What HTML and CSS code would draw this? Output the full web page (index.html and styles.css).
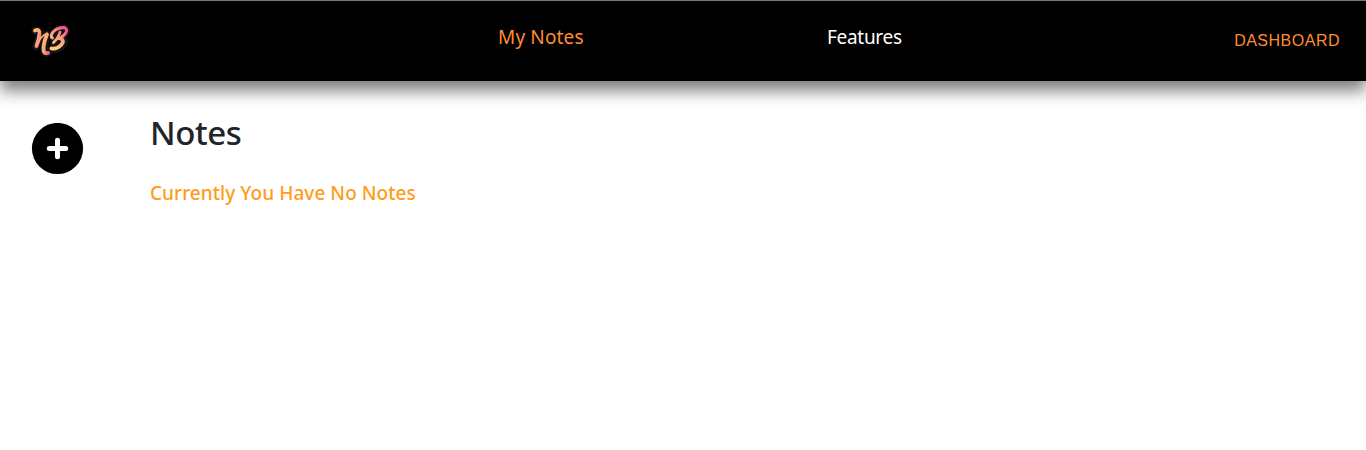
FILE: index.html
```
<!DOCTYPE html>
<html lang="en">
<head>
<meta charset="utf-8">
<title>Notes</title>
<link rel="stylesheet" href="styles.css">
</head>
<body>
<header class="navbar">
  <a class="logo" aria-label="Home">
    <svg width="40" height="36" viewBox="0 0 40 36" fill="none" stroke-linecap="round" stroke-linejoin="round">
      <defs>
        <linearGradient id="warm" x1="0" y1="0" x2="1" y2="1"><stop offset="0" stop-color="#f8b66a"/><stop offset=".5" stop-color="#fbab78"/><stop offset="1" stop-color="#f6608c"/></linearGradient>
        <linearGradient id="bowl" gradientUnits="userSpaceOnUse" x1="20" y1="26" x2="36" y2="6"><stop offset="0" stop-color="#ffd080"/><stop offset=".5" stop-color="#fba680"/><stop offset="1" stop-color="#f5508c"/></linearGradient>
      </defs>
      <g stroke="#151515" stroke-width="7">
        <path d="M4 8Q8 6 9 10L5 24M8 19Q13 10 16 11L13 26Q12 32 17 30"/>
        <path d="M20 14Q24 4 34 5Q38 10 29 16Q37 17 31 23Q25 28 20 26M28 8L22 24"/>
      </g>
      <g stroke="url(#warm)">
        <path d="M4 7.500Q9 5.500 8.500 11Q8 17 5.500 23" stroke-width="3.800"/>
        <path d="M6 22Q10 12.500 16 10.500" stroke-width="1.800"/>
        <path d="M16 11.500Q13 18 12.500 24Q12 31.500 17 30" stroke-width="3.900"/>
      </g>
      <g stroke="url(#bowl)">
        <path d="M21.500 15Q18.500 13 22.500 8.500Q26.500 4.500 33.500 4.500Q37.500 6.500 34 11Q31.500 14 28 15.500" stroke-width="2.900"/>
        <path d="M29.500 15.500Q34 17.500 30.500 21.500Q26 26.500 20.500 25.500" stroke-width="3.800"/>
        <path d="M29 9Q27.500 15 22.500 19.500" stroke-width="2.800"/>
      </g>
    </svg>
  </a>
  <nav class="links">
    <a class="link active">My Notes</a>
    <a class="link">Features</a>
  </nav>
  <a class="dashboard">DASHBOARD</a>
</header>
<main class="page">
  <button class="add" aria-label="Add note">
    <svg width="53" height="52" viewBox="0 0 53 52"><circle cx="26.500" cy="25.500" r="25.600"/><path d="M26.500 17.300V33.700M18.300 25.500H34.700" stroke="#fff" stroke-width="5" stroke-linecap="round"/></svg>
  </button>
  <section class="notes">
    <h1 class="title">Notes</h1>
    <p class="empty">Currently You Have No Notes</p>
  </section>
</main>
</body>
</html>
```
FILE: styles.css
```
* { box-sizing: border-box; }
body { margin: 0; background: #fff; font-family: "Segoe UI", "Noto Sans", sans-serif; color: #212529; overflow: hidden; }
.navbar { display: flex; align-items: flex-start; height: 81px; padding: 0 26px 0 31px; background: #000; border-top: 1px solid #777; box-shadow: 0 10px 15px 0 rgba(0, 0, 0, .5); }
.logo { display: block; width: 40px; height: 36px; margin-top: 22px; }
.logo svg { display: block; }
.links { display: flex; gap: 243px; margin-left: 427px; padding-top: 22px; }
.link { width: 86px; font-size: 19px; line-height: 28px; letter-spacing: -.3px; color: #fff; white-space: nowrap; }
.active { letter-spacing: .15px; color: #ff8c32; }
.dashboard { margin-left: auto; padding-top: 30px; font: 16px/20px "Liberation Sans", Arial, sans-serif; letter-spacing: .5px; color: #ff8c32; }
.page { display: flex; gap: 66px; padding: 30px 31px; }
.add { width: 53px; height: 52px; margin-top: 12px; padding: 0; border: 0; background: none; }
.add svg { display: block; }
.title { margin: 0; font-size: 33px; font-weight: 500; line-height: 44px; letter-spacing: -.4px; }
.empty { margin: 24px 0 0; font-size: 19px; font-weight: 500; line-height: 28px; letter-spacing: .05px; color: #ff9c19; white-space: nowrap; }
```
